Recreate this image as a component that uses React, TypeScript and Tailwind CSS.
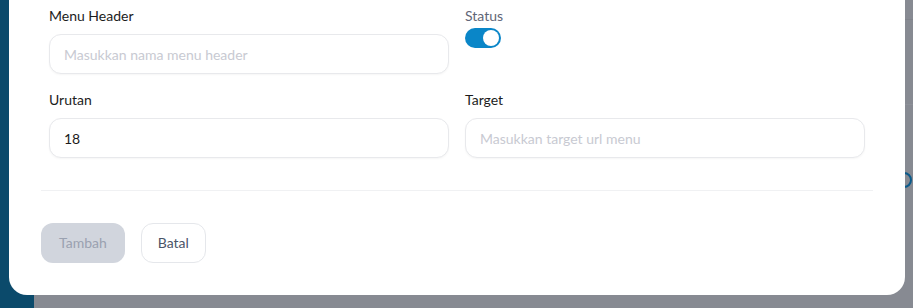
import { useState } from "react";

function Field({
  label,
  placeholder,
  value,
}: {
  label: string;
  placeholder: string;
  value?: string;
}) {
  return (
    <div className="flex flex-col">
      <label className="mb-2 text-sm leading-5 text-[#1c1c1c]">{label}</label>
      <input
        defaultValue={value}
        placeholder={placeholder}
        className="h-10 w-full rounded-xl border border-[#e8e9ec] bg-white px-[14px] text-sm text-[#1c1c1c] shadow-[0_1px_2px_rgba(0,0,0,0.04)] outline-none placeholder:text-[#c8cad2]"
      />
    </div>
  );
}

export default function App() {
  const [active, setActive] = useState(true);

  return (
    <div
      className="relative h-[308px] w-[913px] overflow-hidden"
      style={{ fontFamily: "Lato, 'Noto Sans', sans-serif" }}
    >
      {/* page behind the overlay */}
      <div className="flex h-full">
        <div className="w-[34px] bg-[#0b4a6b]" />
        <div className="flex-1 bg-[#878a92]">
          <div className="h-5 border-b border-[#80838b]" />
          <div className="h-[85px] border-b border-[#8d9098]" />
        </div>
      </div>
      <div className="absolute left-[896px] top-[172px] h-4 w-4 rounded-full border-2 border-[#0b5a8a]" />

      {/* modal */}
      <div className="absolute left-[9px] right-[8px] top-0 h-[295px] rounded-b-[18px] bg-white px-8">
        <div className="grid grid-cols-2 gap-x-4 gap-y-4 px-2 pt-[6px]">
          <Field label="Menu Header" placeholder="Masukkan nama menu header" />
          <div className="flex flex-col">
            <span className="text-sm leading-5 text-[#5f6677]">Status</span>
            <button
              onClick={() => setActive(!active)}
              className={`mt-[2px] flex h-5 w-9 items-center rounded-full p-[2px] ${
                active ? "justify-end bg-[#0a86c8]" : "justify-start bg-gray-300"
              }`}
            >
              <span className="h-4 w-4 rounded-full bg-white" />
            </button>
          </div>
          <Field label="Urutan" placeholder="" value="18" />
          <Field label="Target" placeholder="Masukkan target url menu" />
        </div>

        <div className="mt-8 border-t border-[#f0f1f3]" />

        <div className="flex gap-4 pt-8">
          <button className="h-10 rounded-xl bg-[#d1d5dd] px-[18px] text-sm text-[#9aa1b0]">
            Tambah
          </button>
          <button className="h-10 rounded-xl border border-[#e5e7eb] bg-white px-4 text-sm text-[#4b5468]">
            Batal
          </button>
        </div>
      </div>
    </div>
  );
}
